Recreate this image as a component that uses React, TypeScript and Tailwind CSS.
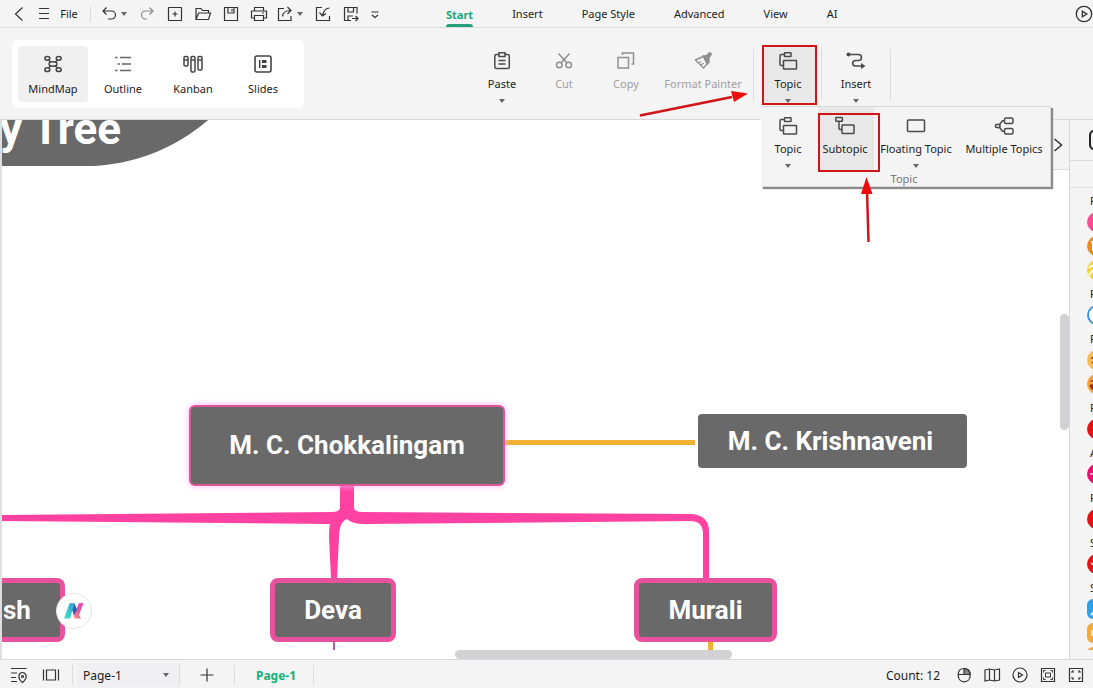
import type { ReactNode } from "react";

type IconProps = { children: ReactNode; size?: string; color?: string };

function Icon({ children, size = "size-5", color = "text-[#333]" }: IconProps) {
  return (
    <svg
      viewBox="0 0 20 20"
      className={`${size} ${color} shrink-0`}
      fill="none"
      stroke="currentColor"
      strokeWidth="1.2"
      aria-hidden="true"
    >
      {children}
    </svg>
  );
}

function Caret() {
  return (
    <svg viewBox="0 0 6 4" className="h-1 w-1.5 shrink-0 text-[#666]" aria-hidden="true">
      <path d="M0 0h6L3 4z" fill="currentColor" />
    </svg>
  );
}

const icons = {
  back: <path d="M13.500 3.500 6.500 10l7 6.500" />,
  menu: <path d="M5 4.500h10M5 9.500h10M5 14.500h10" />,
  undo: <path d="M7.500 3.500 4 7l3.500 3.500M4 7h8.500a4 4 0 0 1 0 8H9" />,
  redo: <path d="m12.500 3.500 3.500 3.500-3.500 3.500M16 7H8.500a4 4 0 0 0 0 8H10" />,
  add: (
    <>
      <rect x="3.500" y="3.500" width="13" height="13" rx="0.500" />
      <path d="M10 7.500v5M7.500 10h5" />
    </>
  ),
  folder: <path d="M3 15.500v-11h5l1.500 2h6V9M3 15.500 5.500 9H17.500L15.500 15.500z" />,
  save: <path d="M3.500 3.500h13v13h-13zM7 3.500v5.500h6V3.500M11 5v2.500" />,
  print: (
    <>
      <path d="M5.500 7V3.500h9V7M5.500 14H2.500V7h15v7h-3" />
      <path d="M5.500 11.500h9v5h-9zM13 9h2" />
    </>
  ),
  share: <path d="M9 4.500H3.500v12h12.500V12M7.500 12.500c.5-4 3-6 8-6M12.500 3l3.500 3.500-3.500 3.500" />,
  import: (
    <>
      <path d="M9 3.500H3.500v13h13V12" />
      <path d="M16.500 4c-4 0-6 3-7 7.500M6.500 8.500l3 3.500 3.500-2.500" />
    </>
  ),
  saveAs: (
    <>
      <path d="M16 9.500V3.500H3.500v13H10M7 3.500V8h5.500V3.500" />
      <path d="M7 16.500V12h5M11 14.500h6M14.500 12l2.500 2.500-2.500 2.500" />
    </>
  ),
  more: <path d="M6.500 8h7M7 11l3 2.500 3-2.500" />,
  play: (
    <>
      <circle cx="10" cy="10" r="7" />
      <path d="M8.500 7.500v5l4-2.500z" />
    </>
  ),
  mindmap: (
    <g strokeWidth="1.500">
      <ellipse cx="10" cy="10" rx="4" ry="2.200" />
      <ellipse cx="4.300" cy="4.300" rx="2.500" ry="1.900" />
      <ellipse cx="15.700" cy="4.300" rx="2.500" ry="1.900" />
      <ellipse cx="4.300" cy="15.700" rx="2.500" ry="1.900" />
      <ellipse cx="15.700" cy="15.700" rx="2.500" ry="1.900" />
      <path d="m5.500 6 2.500 2.500M14.500 6 12 8.500M5.500 14 8 11.500M14.500 14 12 11.500" />
    </g>
  ),
  outline: (
    <path d="M7 3.500h11M9 10h9M7 16.500h11M2 3.500h2.500M4.500 10H7M2 16.500h2.500" stroke="#666" strokeWidth="1.500" />
  ),
  kanban: (
    <g strokeWidth="1.500">
      <rect x="1" y="2.500" width="4" height="9.500" rx="1.300" />
      <rect x="8" y="2.500" width="4" height="15.500" rx="1.300" />
      <rect x="15" y="2.500" width="4" height="13.500" rx="1.300" />
      <path d="M1 6h4M8 6h4M15 6h4" />
    </g>
  ),
  slides: (
    <>
      <rect x="2" y="2" width="16" height="16" rx="2" strokeWidth="1.600" />
      <path d="M6.700 6v8" strokeWidth="1.500" />
      <path d="M9 6h4.500v3H9zM9 11h4.500v3H9z" fill="currentColor" stroke="none" />
    </>
  ),
  paste: (
    <>
      <rect x="2.800" y="3.500" width="14.500" height="14" rx="1.500" strokeWidth="1.500" />
      <path d="M7 1.700h6v3.800H7z" fill="#f4f4f4" strokeWidth="1.500" />
      <path d="M6.500 9.500h7M6.500 13h7" strokeWidth="1.400" />
    </>
  ),
  cut: (
    <g strokeWidth="1.500">
      <circle cx="5.300" cy="14" r="2.800" />
      <circle cx="14.700" cy="14" r="2.800" />
      <path d="m4.500 2.500 8.500 9.500M15.500 2.500 7 12" />
    </g>
  ),
  copy: <path d="M2 6.500h10.500v10.500H2zM6.500 4V2H17.500V13H15.500" strokeWidth="1.500" />,
  painter: (
    <>
      <path d="m2.500 9 8.500-4 4.500 6.500-5 5.500z" strokeWidth="1.400" />
      <path d="m10 5 3.500-.500L16.500 1.500l2 1.500-2.500 4v4.500l-2 1.500z" fill="currentColor" />
      <path d="m5.500 11.500 2.500-1M8 14l2.500-2" />
    </>
  ),
  topic: (
    <g strokeWidth="1.500">
      <path d="M7 3.500H3.200q-1.200 0-1.200 1.200v8.500q0 1.300 1.300 1.300H5.500" />
      <rect x="6.500" y="1.800" width="6.500" height="3.700" rx="0.500" />
      <rect x="5.500" y="9.500" width="13" height="8.500" rx="0.500" />
    </g>
  ),
  subtopic: (
    <g strokeWidth="1.500">
      <rect x="0.800" y="1.500" width="6.500" height="3.700" rx="0.500" />
      <path d="M4 5.500v6.800q0 1.200 1.200 1.200h1.800" />
      <rect x="7" y="9" width="12" height="8.500" rx="0.500" />
    </g>
  ),
  floating: <rect x="1.500" y="4" width="17" height="11.500" rx="1" strokeWidth="1.500" />,
  multiple: (
    <g strokeWidth="1.500">
      <rect x="10.500" y="2" width="8.500" height="5.500" rx="1.500" />
      <rect x="10.500" y="12.500" width="8.500" height="5.500" rx="1.500" />
      <path d="M10.500 4.700H8.500L5.500 8.500M10.500 15.300H8.500L5.500 11.500" />
      <rect x="1.500" y="8.500" width="4.500" height="3" rx="1" />
    </g>
  ),
  relation: (
    <>
      <path d="M3 3.500h9.500a3 3 0 0 1 0 6H9.500a2.500 2.500 0 0 0 0 5.500H16" strokeWidth="1.600" />
      <circle cx="2.500" cy="3.500" r="2" fill="currentColor" stroke="none" />
      <path d="m15 12 4.500 3-4.500 3z" fill="currentColor" stroke="none" />
    </>
  ),
  locate: (
    <>
      <path d="M2 3.500h15.500M2 8h6M2 12.500h5M2 16.500h6" />
      <path d="M13.500 17.500c-6-5-3.500-10 0-10s6 5 0 10z" />
      <circle cx="13.500" cy="11.500" r="1" />
    </>
  ),
  fitWidth: <path d="M2.500 4.500v11M17.500 4.500v11M5.500 5h9v10h-9z" />,
  plus: <path d="M10 3.500v13M3.500 10h13" />,
  mouse: (
    <>
      <path d="M10 3.500v6h6c0-3.500-2-6-6-6z" fill="#888" />
      <path d="M4.500 9.500h11.500M10 3.500c-4 0-5.800 2.500-5.800 6.500s2.300 6.800 6 6.800 6-2.800 6-6.800-2.200-6.500-6.200-6.500z" />
    </>
  ),
  map: <path d="m3 5 4.500-1L12.500 5 17.500 4v11l-5 1-5-1L3 16zM7.500 4v11M12.500 5v11" />,
  frame: (
    <>
      <path d="M3.500 3.500h13v13h-13z" />
      <path d="M7.500 8h5v4h-5zM5.500 7.500v-2h2M12.500 5.500h2v2M14.500 12.500v2h-2M7.500 14.500h-2v-2" strokeWidth="1" />
    </>
  ),
  expand: (
    <>
      <path d="M3.500 3.500h13v13h-13z" />
      <path
        d="M6 8V6h2M6 6l1.500 1.500M12 6h2v2M14 6l-1.500 1.500M14 12v2h-2M14 14l-1.500-1.500M8 14H6v-2M6 14l1.500-1.500"
        strokeWidth="1"
      />
    </>
  ),
  chevron: <path d="m6.500 4 7 6-7 6" strokeWidth="1.500" />,
};

type QuickProps = { label: string; icon: ReactNode; color?: string; width?: string };

function QuickButton({ label, icon, color, width = "w-7" }: QuickProps) {
  return (
    <button aria-label={label} className={`flex h-7 ${width} shrink-0 items-center justify-center`}>
      <Icon color={color}>{icon}</Icon>
    </button>
  );
}

function ModeButton({ label, icon, active }: { label: string; icon: ReactNode; active?: boolean }) {
  return (
    <button className={`flex h-14 w-[70px] flex-col items-center gap-[5px] rounded pt-2 ${active ? "bg-[#f0f0f0]" : ""}`}>
      <Icon color="text-[#444]">{icon}</Icon>
      <span className="leading-5 whitespace-nowrap">{label}</span>
    </button>
  );
}

type ToolProps = {
  label: string;
  icon: ReactNode;
  width: string;
  caret?: boolean;
  disabled?: boolean;
};

function ToolButton({ label, icon, width, caret, disabled }: ToolProps) {
  return (
    <button
      disabled={disabled}
      className={`flex h-[60px] shrink-0 flex-col items-center pt-1.5 ${width} ${disabled ? "text-[#a0a0a0]" : ""}`}
    >
      <Icon color={disabled ? "text-[#909090]" : "text-[#4a4a4a]"}>{icon}</Icon>
      <span className="mt-[5px] mb-[7px] leading-4 whitespace-nowrap">{label}</span>
      {caret && <Caret />}
    </button>
  );
}

function Divider() {
  return <span className="h-[52px] w-px shrink-0 bg-[#dcdcdc]" />;
}

const tabs = ["Insert", "Page Style", "Advanced", "View", "AI"];

function TitleBar() {
  return (
    <header className="flex h-7 shrink-0 items-center border-b border-[#dcdcdc] bg-[#f4f4f4] pl-2.5">
      <div className="flex w-[436px] shrink-0 items-center">
        <QuickButton label="Back" icon={icons.back} width="w-[18px]" />
        <QuickButton label="Menu" icon={icons.menu} width="w-8" />
        <button className="w-[18px] pt-0.5">File</button>
        <span className="mr-1.5 ml-3 h-4 w-px bg-[#dcdcdc]" />
        <QuickButton label="Undo" icon={icons.undo} width="w-6" />
        <Caret />
        <span className="w-1.5" />
        <QuickButton label="Redo" icon={icons.redo} color="text-[#888]" />
        <QuickButton label="New" icon={icons.add} />
        <QuickButton label="Open" icon={icons.folder} />
        <QuickButton label="Save" icon={icons.save} />
        <QuickButton label="Print" icon={icons.print} />
        <QuickButton label="Share" icon={icons.share} width="w-6" />
        <Caret />
        <span className="w-1.5" />
        <QuickButton label="Import" icon={icons.import} />
        <QuickButton label="Save as" icon={icons.saveAs} />
        <QuickButton label="More" icon={icons.more} width="w-5" />
      </div>
      <nav className="flex h-full items-center gap-[39px]">
        <button className="flex h-full flex-col justify-between pt-1.5 font-bold text-[#16a97c]">
          <span className="leading-[18px]">Start</span>
          <span className="h-[3px] w-full rounded-t bg-[#26a07c]" />
        </button>
        {tabs.map((tab) => (
          <button key={tab} className="pt-0.5 whitespace-nowrap">
            {tab}
          </button>
        ))}
      </nav>
      <button aria-label="Play" className="-mr-0.5 ml-auto shrink-0">
        <Icon size="size-[22px]">{icons.play}</Icon>
      </button>
    </header>
  );
}

function TopicMenu() {
  return (
    <div className="absolute top-[61px] -left-px z-20 h-[81px] w-[290px] border border-[#d8d8d8] border-l-[#f4f4f4] bg-[#f4f4f4] shadow-[2px_2px_1px_#8a8a8a]">
      <div className="flex">
        <div className="w-14 pt-[3px]">
          <ToolButton label="Topic" icon={icons.topic} width="w-[52px]" caret />
        </div>
        <div className="relative w-14 bg-[#e8e8e8] pt-[3px]">
          <ToolButton label="Subtopic" icon={icons.subtopic} width="w-[54px]" />
          <span className="absolute top-1.5 left-0 h-[59px] w-[62px] border-2 border-[#cf1518]" />
        </div>
        <div className="w-[84px] pt-[3px]">
          <ToolButton label="Floating Topic" icon={icons.floating} width="w-[84px]" caret />
        </div>
        <div className="w-[92px] pt-[3px]">
          <ToolButton label="Multiple Topics" icon={icons.multiple} width="w-[92px]" />
        </div>
      </div>
      <p className="pr-1 text-center leading-[18px] text-[#777]">Topic</p>
    </div>
  );
}

function Ribbon() {
  return (
    <section className="flex h-[92px] shrink-0 items-start border-b border-[#d9d9d9] bg-[#f4f4f4] pl-3">
      <div className="mt-3 flex shrink-0 rounded-md bg-white p-1.5">
        <ModeButton label="MindMap" icon={icons.mindmap} active />
        <ModeButton label="Outline" icon={icons.outline} />
        <ModeButton label="Kanban" icon={icons.kanban} />
        <ModeButton label="Slides" icon={icons.slides} />
      </div>
      <div className="mt-[17px] ml-[167px] flex shrink-0 items-center">
        <ToolButton label="Paste" icon={icons.paste} width="w-[62px]" caret />
        <ToolButton label="Cut" icon={icons.cut} width="w-[62px]" disabled />
        <ToolButton label="Copy" icon={icons.copy} width="w-[62px]" disabled />
        <ToolButton label="Format Painter" icon={icons.painter} width="w-[92px]" disabled />
        <span className="w-1" />
        <Divider />
        <div className="relative mr-1 ml-2">
          <div className="w-[55px] bg-[#e8e8e8] outline-2 -outline-offset-2 outline-[#cf1518]">
            <ToolButton label="Topic" icon={icons.topic} width="w-[52px]" caret />
          </div>
          <TopicMenu />
        </div>
        <Divider />
        <ToolButton label="Insert" icon={icons.relation} width="w-[68px]" caret />
        <Divider />
      </div>
    </section>
  );
}

function Pointers() {
  return (
    <svg className="pointer-events-none absolute top-0 left-0 z-30 h-64 w-[900px]" aria-hidden="true">
      <path d="M640 115.500 732 97" stroke="#cf1518" strokeWidth="2.500" />
      <path d="m748 93.500-17-2.500 3 11z" fill="#f00b0b" />
      <path d="M868.500 242 867 190" stroke="#cf1518" strokeWidth="2.500" />
      <path d="m866.500 177-5.500 17h11.500z" fill="#f00b0b" />
    </svg>
  );
}

function Connectors() {
  return (
    <svg className="absolute top-0 left-0 h-[540px] w-[1000px]" aria-hidden="true">
      <g fill="#ff42a1">
        <path d="M340 365h14v22q0 5 8 5l330 2q17 2 17 17v48h-6v-45q0-13-13-13l-326 3q-12 0-17-5-8 3-8 18l-2 41h-6l-2-40q0-10 1-14L0 401v-6l332-3q8 0 8-5z" />
        <path d="M333 521h2v9h-2z" fill="#c65a96" />
      </g>
      <g fill="#f0b233">
        <path d="M505 320h190v5H505z" />
        <path d="M708 521h5v9h-5z" />
      </g>
    </svg>
  );
}

const nodeText =
  "absolute flex items-center justify-center bg-[#696969] text-[26px] font-bold text-white whitespace-nowrap font-['Roboto',sans-serif]";

function Canvas() {
  return (
    <main className="relative min-w-0 flex-1 overflow-hidden border-l-2 border-[#dedede] bg-white">
      <div className="absolute inset-y-0 -left-0.5 w-full">
        <div className="absolute -top-[330px] left-0 h-[376px] w-[273px] rounded-r-[188px] bg-[#696969]" />
        <p className="absolute -top-[15px] left-0 font-['Roboto',sans-serif] text-[44px] leading-[48px] font-bold whitespace-nowrap text-white">
          y Tree
        </p>
        <Connectors />
        <div
          className={`${nodeText} top-[285px] left-[189px] h-[81px] w-[316px] rounded-md border-2 border-[#dc5699] shadow-[0_0_6px_#ffb0f0]`}
        >
          M. C. Chokkalingam
        </div>
        <div className={`${nodeText} top-[294px] left-[698px] h-[54px] w-[269px] rounded pr-1`}>M. C. Krishnaveni</div>
        <div className={`${nodeText} top-[458px] left-[270px] h-16 w-[126px] rounded-lg border-5 border-[#e9509e]`}>Deva</div>
        <div className={`${nodeText} top-[458px] left-[634px] h-16 w-[143px] rounded-lg border-5 border-[#e9509e]`}>Murali</div>
        <div className={`${nodeText} top-[458px] left-0 h-16 w-[65px] rounded-r-lg border-5 border-l-0 border-[#e9509e]`}>
          <span className="w-full pl-[3px] text-left">sh</span>
        </div>
        <button
          aria-label="Assistant"
          className="absolute top-[473px] left-14 flex size-9 items-center justify-center rounded-full border border-[#e6e6e6] bg-white"
        >
          <svg viewBox="0 0 22 18" className="h-[18px] w-[22px]" aria-hidden="true">
            <defs>
              <linearGradient id="cyan" x1="0" y1="1" x2="1" y2="0">
                <stop offset="0" stopColor="#3fe0c5" />
                <stop offset="1" stopColor="#2aa5d8" />
              </linearGradient>
              <linearGradient id="pink" x1="1" y1="0" x2="0" y2="1">
                <stop offset="0" stopColor="#e44bd0" />
                <stop offset="0.5" stopColor="#e0559c" />
                <stop offset="1" stopColor="#f9a27c" />
              </linearGradient>
            </defs>
            <path d="M16 1h4.500L16 13l2 3.500h-6.500l-1-3z" fill="url(#pink)" />
            <path d="M7 1.500h4.500l2.500 6-3 6z" fill="#3157b8" />
            <path d="M6.500 1.500h5l-4.500 15H1z" fill="url(#cyan)" />
          </svg>
        </button>
      </div>
      <button
        aria-label="Collapse panel"
        className="absolute top-0 right-0 flex h-[50px] w-[22px] items-center justify-center border-b border-[#dcdcdc] bg-[#f4f4f4]"
      >
        <Icon>{icons.chevron}</Icon>
      </button>
      <span className="absolute top-[194px] right-0 h-[116px] w-[9px] rounded-full bg-[#d2d2d4]" />
      <span className="absolute bottom-0 left-[453px] h-[9px] w-[277px] rounded-full bg-[#d2d2d4]" />
    </main>
  );
}

const markerGroups = [
  { label: "P", marks: ["bg-[#ff4b93]", "bg-[#ee8a22]", "bg-[#f4d534]"] },
  { label: "P", marks: ["border-2 border-[#3d94dd] bg-white"] },
  { label: "F", marks: ["bg-[#f9b94f]", "bg-[#f5a13c]"] },
  { label: "F", marks: ["bg-[#e41414]"] },
  { label: "A", marks: ["bg-[#ee0e72]"] },
  { label: "P", marks: ["bg-[#e41414]"] },
  { label: "S", marks: ["bg-[#e41414]"] },
  { label: "S", marks: ["rounded-md bg-[#2ba1ee]", "rounded-md bg-[#f2a93e]", "rounded-md bg-[#f2a93e]"] },
];

const glyphs: Record<string, ReactNode> = {
  "0-1": <path d="M4 6h2v9" stroke="#fff" strokeWidth="2" fill="none" />,
  "0-2": <path d="M2 8c3-4 6-2 5 1l-5 6" stroke="#fff" strokeWidth="2" fill="none" />,
  "2-0": <path d="M4 8h2M5 12q3 3 6 2" stroke="#7a4a15" strokeWidth="1.5" fill="none" />,
  "2-1": <path d="M3 7h4M3 11h8v6q-7 0-8-6z" stroke="#8a2a15" strokeWidth="1" fill="#b02020" />,
  "4-0": <path d="M3 10h3" stroke="#ff9bc8" strokeWidth="2" />,
  "6-0": <path d="m4 9 3 2" stroke="#fff" strokeWidth="1.5" />,
  "7-0": <path d="m4 16 3-3" stroke="#fff" strokeWidth="2" />,
  "7-1": <path d="M4 7h4v6H4z" fill="#ffe3b0" />,
};

function MarkerPanel() {
  return (
    <aside className="flex w-6 shrink-0 flex-col overflow-hidden border-l border-[#d9d9d9] bg-[#f4f4f4]">
      <div className="h-[41px] shrink-0 border-b border-[#dcdcdc] pt-2.5 pl-[19px]">
        <button aria-label="Panel" className="block h-5 w-6 rounded-[5px] border-2 border-[#222]" />
      </div>
      <div className="h-[27px] shrink-0 border-b border-[#dcdcdc]" />
      <div className="mt-0.5 mb-[9px] flex min-h-0 flex-1 flex-col gap-px overflow-hidden pl-[17px]">
        {markerGroups.map((group, g) => (
          <section key={g} className="shrink-0">
            <h3 className="h-5 pl-[3px] leading-[22px]">{group.label}</h3>
            {group.marks.map((mark, m) => (
              <div key={m} className="flex h-6 items-center">
                <span className={`block size-5 shrink-0 ${mark.startsWith("rounded") ? mark : `rounded-full ${mark}`}`}>
                  <svg viewBox="0 0 20 20" className="size-full" aria-hidden="true">
                    {glyphs[`${g}-${m}`]}
                  </svg>
                </span>
              </div>
            ))}
          </section>
        ))}
      </div>
    </aside>
  );
}

function StatusBar() {
  return (
    <footer className="flex h-[29px] shrink-0 items-center border-t border-[#d9d9d9] bg-[#f4f4f4] px-[3px] pt-px text-[12px]">
      <QuickButton label="Locate" icon={icons.locate} width="w-8" />
      <QuickButton label="Fit width" icon={icons.fitWidth} width="w-8" />
      <span className="ml-[5px] h-5 w-px bg-[#dcdcdc]" />
      <label className="relative ml-1 flex items-center">
        <select aria-label="Page" className="h-6 w-[102px] appearance-none bg-[#f0f0f3] pt-0.5 pl-1.5 outline-none">
          <option>Page-1</option>
        </select>
        <span className="absolute right-2.5">
          <Caret />
        </span>
      </label>
      <span className="h-5 w-px bg-[#dcdcdc]" />
      <QuickButton label="Add page" icon={icons.plus} width="w-[54px]" />
      <span className="h-5 w-px bg-[#dcdcdc]" />
      <button className="w-[78px] pt-0.5 pl-1 font-bold text-[#16b077]">Page-1</button>
      <span className="h-5 w-px bg-[#dcdcdc]" />
      <span className="mr-2.5 ml-auto pt-0.5 whitespace-nowrap">Count: 12</span>
      <QuickButton label="Mouse mode" icon={icons.mouse} />
      <QuickButton label="Map" icon={icons.map} />
      <QuickButton label="Present" icon={icons.play} />
      <QuickButton label="Fit page" icon={icons.frame} />
      <QuickButton label="Full screen" icon={icons.expand} />
    </footer>
  );
}

export default function App() {
  return (
    <div className="relative flex h-screen flex-col overflow-hidden bg-white font-['Noto_Sans',sans-serif] text-[11px] text-[#1c1c1c]">
      <TitleBar />
      <Ribbon />
      <div className="flex min-h-0 flex-1">
        <Canvas />
        <MarkerPanel />
      </div>
      <StatusBar />
      <Pointers />
    </div>
  );
}
